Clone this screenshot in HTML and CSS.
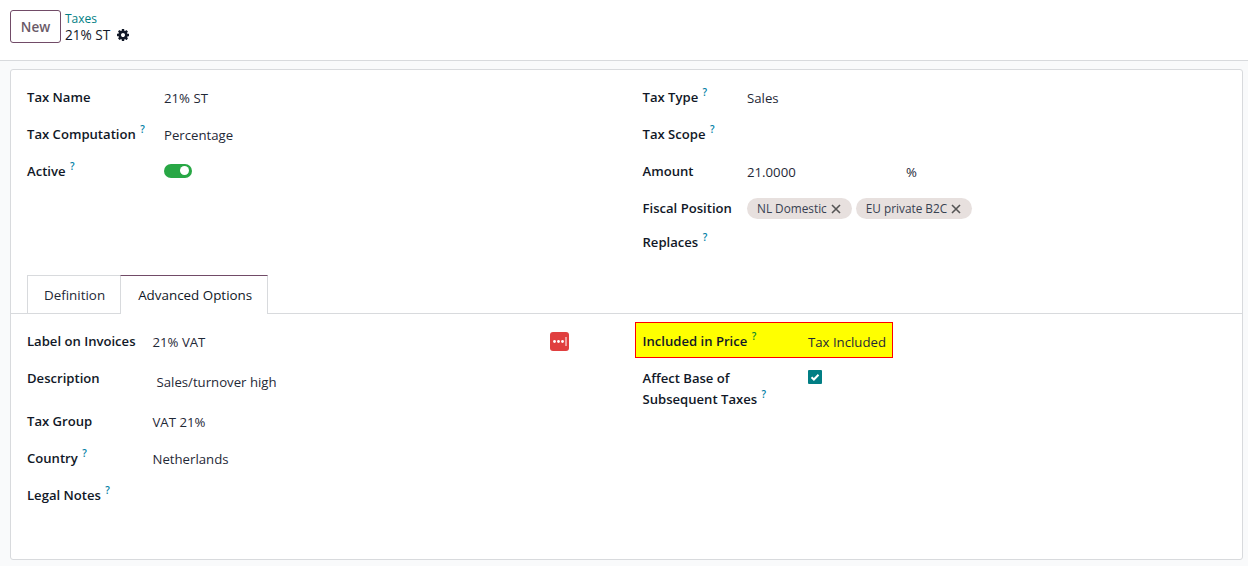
FILE: index.html
```html
<!DOCTYPE html>
<html lang="en">
<head>
<meta charset="utf-8">
<title>21% ST</title>
<link rel="stylesheet" href="styles.css">
</head>
<body>
<header class="topbar">
  <button class="btn-new">New</button>
  <div class="crumbs">
    <a class="crumb-link">Taxes</a>
    <div class="crumb-current">21% ST
      <svg class="gear" viewBox="0 0 1792 1792"><path fill="#111827" d="M1152 896q0-106-75-181t-181-75-181 75-75 181 75 181 181 75 181-75 75-181zm512-109v222q0 12-8 23t-20 13l-185 28q-19 54-39 91 35 50 107 138 10 12 10 25t-9 23q-27 37-99 108t-94 71q-12 0-26-9l-138-108q-44 23-91 38-16 136-29 186-7 28-36 28h-222q-14 0-24.500-8.500t-11.500-21.500l-28-184q-49-16-90-37l-141 107q-10 9-25 9-14 0-25-11-126-114-165-168-7-10-7-23 0-12 8-23 15-21 51-66.500t54-70.500q-27-50-41-99l-183-27q-13-2-21-12.500t-8-23.500v-222q0-12 8-23t19-13l186-28q14-46 39-92-40-57-107-138-10-12-10-24 0-10 9-23 26-36 98.500-107.500t94.500-71.500q13 0 26 10l138 107q44-23 91-38 16-136 29-186 7-28 36-28h222q14 0 24.500 8.500t11.500 21.500l28 184q49 16 90 37l142-107q9-9 24-9 13 0 25 10 129 119 165 170 7 8 7 22 0 12-8 23-15 21-51 66.500t-54 70.500q26 50 41 98l183 28q13 2 21 12.500t8 23.500z"/></svg>
    </div>
  </div>
</header>
<main class="sheet">
  <section class="columns head">
    <div class="col col-a">
      <div class="row"><span class="label">Tax Name</span><span class="value">21% ST</span></div>
      <div class="row"><span class="label">Tax Computation <sup>?</sup></span><span class="value">Percentage</span></div>
      <div class="row"><span class="label">Active <sup>?</sup></span><span class="value bare"><span class="toggle"><span class="knob"></span></span></span></div>
    </div>
    <div class="col col-b">
      <div class="row"><span class="label">Tax Type <sup>?</sup></span><span class="value">Sales</span></div>
      <div class="row"><span class="label">Tax Scope <sup>?</sup></span><span class="value"></span></div>
      <div class="row"><span class="label">Amount</span><span class="value amount"><span>21.0000</span><span>%</span></span></div>
      <div class="row"><span class="label">Fiscal Position</span><span class="value bare tags">
        <span class="tag">NL Domestic <svg class="x" viewBox="0 0 10 10"><path d="M1 1l8 8M9 1l-8 8"/></svg></span>
        <span class="tag">EU private B2C <svg class="x" viewBox="0 0 10 10"><path d="M1 1l8 8M9 1l-8 8"/></svg></span>
      </span></div>
      <div class="row short"><span class="label">Replaces <sup>?</sup></span><span class="value"></span></div>
    </div>
  </section>
  <nav class="tabs">
    <span class="tab">Definition</span>
    <span class="tab active">Advanced Options</span>
  </nav>
  <section class="columns body">
    <div class="col col-c">
      <div class="row"><span class="label">Label on Invoices</span><span class="value split"><span>21% VAT</span>
        <svg class="pw" viewBox="0 0 19 19"><rect width="19" height="19" rx="3" fill="#e03f3f"/><circle cx="4.500" cy="9.500" r="1.400" fill="#fff"/><circle cx="8.500" cy="9.500" r="1.400" fill="#fff"/><circle cx="12.500" cy="9.500" r="1.400" fill="#fff"/><rect x="15.500" y="5" width="1" height="9" fill="#fff"/></svg>
      </span></div>
      <div class="row tall"><span class="label">Description</span><span class="value desc">Sales/turnover high</span></div>
      <div class="row"><span class="label">Tax Group</span><span class="value">VAT 21%</span></div>
      <div class="row"><span class="label">Country <sup>?</sup></span><span class="value">Netherlands</span></div>
      <div class="row"><span class="label">Legal Notes <sup>?</sup></span><span class="value"></span></div>
    </div>
    <div class="col col-d">
      <div class="row marked"><span class="label">Included in Price <sup>?</sup></span><span class="value">Tax Included</span></div>
      <div class="row wrap"><span class="label">Affect Base of<br>Subsequent Taxes <sup>?</sup></span><span class="value bare"><span class="check"><svg viewBox="0 0 14 14"><path d="M3.500 7.200l2.400 2.300 4.600-4.700" fill="none" stroke="#fff" stroke-width="2"/></svg></span></span></div>
    </div>
  </section>
</main>
</body>
</html>
```
FILE: styles.css
```css
* { box-sizing: border-box; }
html, body { height: 100%; }
body {
  margin: 0;
  background: #f9fafb;
  color: #1f2937;
  font: 13.2px/21px "Open Sans", "Noto Sans", sans-serif;
  overflow: hidden;
}
.topbar {
  height: 61px;
  background: #fff;
  border-bottom: 1px solid #d8dadd;
  display: flex;
  align-items: flex-start;
  gap: 4px;
  padding: 11px 0 0 10px;
}
.btn-new {
  width: 51px;
  height: 33px;
  margin-top: -1px;
  padding: 0;
  border: 1px solid #714b67;
  border-radius: 3px;
  background: #fff;
  color: #6b5a68;
  font: 600 13.5px "Open Sans", sans-serif;
}
.crumbs { line-height: 16px; }
.crumb-link { display: block; color: #017e84; font-size: 12px; }
.crumb-current { display: flex; align-items: center; gap: 6px; color: #111827; font-size: 13.6px; }
.gear { width: 14px; height: 14px; }
.sheet {
  margin: 8px 5px 0 10px;
  height: 491px;
  background: #fff;
  border: 1px solid #d8dadd;
  border-radius: 3px;
}
.columns { display: grid; grid-template-columns: 615.500px 1fr; padding-left: 16px; }
.head { padding-top: 9px; height: 205px; }
.row { display: flex; height: 37px; align-items: center; }
.row.short { height: 31px; }
.label { font-size: 13.100px; font-weight: 600; color: #111827; flex: none; }
.value { padding-top: 2px; }
.value.bare { padding-top: 0; }
sup { font-size: 10px; color: #0180a5; line-height: 0; font-weight: 600; margin-left: 1px; vertical-align: 6px; }
.col-a .label { width: 137px; }
.col-b .label { width: 104.500px; }
.col-c .label { width: 125.500px; }
.col-d .label { width: 165px; }
.amount { display: flex; width: 170px; justify-content: space-between; }
.tags { display: flex; gap: 4px; }
.tag {
  height: 21px;
  padding: 0 11px 0 10px;
  background: #e7e0de;
  border-radius: 11px;
  color: #374151;
  font-size: 11.800px;
  font-weight: 500;
  display: flex;
  align-items: center;
  gap: 4px;
}
.x { width: 10px; height: 10px; fill: none; stroke: #555; stroke-width: 1.600; }
.toggle {
  display: flex;
  justify-content: flex-end;
  align-items: center;
  width: 28px;
  height: 14px;
  margin-bottom: 2px;
  padding-right: 3px;
  background: #28a745;
  border-radius: 7px;
}
.knob { width: 9px; height: 9px; background: #fff; border-radius: 50%; }
.tabs {
  display: flex;
  height: 39px;
  padding-left: 16px;
  border-bottom: 1px solid #d8dadd;
}
.tab {
  height: 39px;
  padding: 9px 15px 0 16px;
  font-size: 13.400px;
  border: 1px solid #d8dadd;
  border-bottom: none;
  border-right: none;
}
.tab.active {
  padding: 9px 15px 0 17px;
  background: #fff;
  border-top-color: #714b67;
  border-right: 1px solid #d8dadd;
  color: #111827;
}
.body { padding-top: 9px; }
.split { display: flex; justify-content: space-between; align-items: center; width: 416.500px; padding-top: 0; }
.split span { padding-top: 2px; }
.pw { width: 19px; height: 19px; }
.tall { height: 43px; align-items: flex-start; padding-top: 8px; }
.desc { padding: 4px 0 0 4px; }
.marked {
  margin: -1px 0 0 -7.500px;
  padding: 2px 0 0 7.500px;
  width: 258px;
  height: 36px;
  background: #ff0;
  border: 1px solid #f00;
}
.marked .label { width: 165.500px; margin-left: -1px; }
.marked sup { color: #0a8a30; }
.wrap { align-items: flex-start; height: auto; padding-top: 10px; }
.check {
  display: block;
  width: 14px;
  height: 14px;
  margin-top: 2px;
  background: #017e84;
  border-radius: 1px;
}
.check svg { display: block; }
```
